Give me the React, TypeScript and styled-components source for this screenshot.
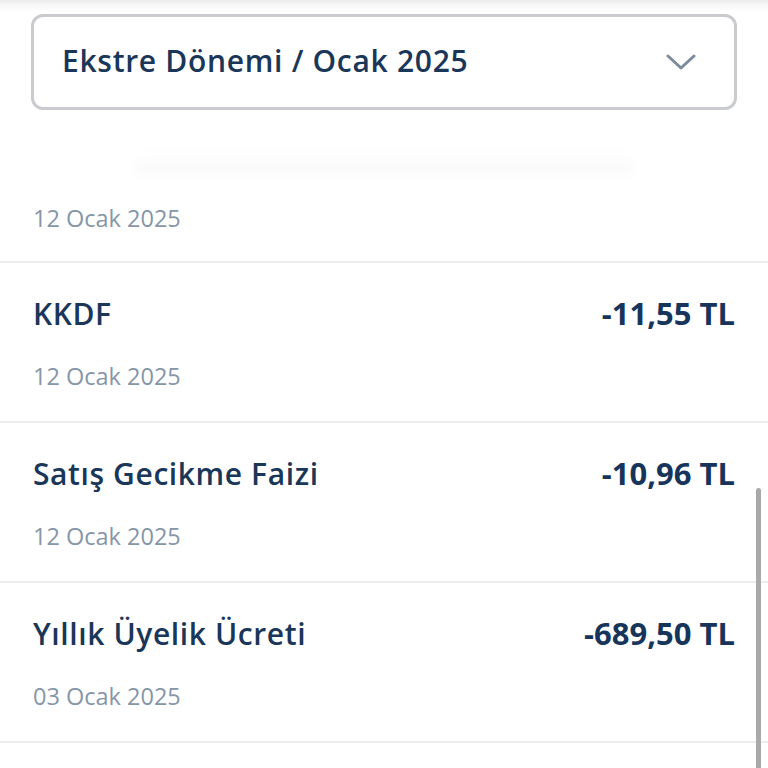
import React from "react";
import styled, { createGlobalStyle } from "styled-components";

const Global = createGlobalStyle`
  html, body { margin: 0; padding: 0; background: #ffffff; }
  body { font-family: "Open Sans", "Noto Sans", sans-serif; -webkit-font-smoothing: antialiased; }
  * { box-sizing: border-box; }
`;

const Page = styled.div`
  position: relative;
  width: 768px;
  height: 768px;
  overflow: hidden;
  background: #ffffff;
`;

const Header = styled.div`
  padding: 14px 31px 0 31px;
  background: linear-gradient(to bottom, #ececec 0px, #f7f7f7 5px, #ffffff 12px);
  background-repeat: no-repeat;
  background-size: 100% 14px;
`;

const Select = styled.div`
  height: 96px;
  border: 3px solid #c9cbce;
  border-radius: 12px;
  background: #ffffff;
  display: flex;
  align-items: center;
  justify-content: space-between;
  padding: 0 38px 0 28px;
`;

const SelectLabel = styled.span`
  font-size: 30px;
  font-weight: 600;
  color: #1a3658;
  letter-spacing: 0.7px;
  margin-top: -4px;
`;

const ShadowBand = styled.div`
  height: 64px;
  display: flex;
  justify-content: center;
  align-items: flex-end;
`;

const Band = styled.div`
  width: 500px;
  height: 22px;
  background: linear-gradient(to bottom, #ffffff, #f8f8f8);
  filter: blur(6px);
`;

const List = styled.div`
  display: flex;
  flex-direction: column;
`;

const TopDate = styled.div`
  height: 89px;
  display: flex;
  align-items: flex-start;
  padding: 28px 33px 0;
  border-bottom: 2px solid #ededee;
`;

const Row = styled.div`
  height: 160px;
  padding: 0 33px;
  border-bottom: 2px solid #ededee;
  display: flex;
  flex-direction: column;
`;

const RowTop = styled.div`
  display: flex;
  justify-content: space-between;
  align-items: center;
  margin-top: 29px;
`;

const Title = styled.span`
  font-size: 30px;
  font-weight: 600;
  color: #1a3658;
  letter-spacing: 0.6px;
`;

const Amount = styled.span`
  font-size: 31px;
  font-weight: 700;
  color: #17345a;
`;

const DateText = styled.span`
  font-size: 23.5px;
  font-weight: 400;
  color: #8596a8;
  margin-top: 26px;
`;

const TopDateText = styled(DateText)`
  margin-top: 0;
`;

const Scrollbar = styled.div`
  position: absolute;
  right: 7px;
  top: 488px;
  bottom: -10px;
  width: 5px;
  border-radius: 3px;
  background: #a9a9a9;
`;

const Chevron = () => (
  <svg width="30" height="18" viewBox="0 0 30 18" fill="none">
    <path d="M2 3 L15 15 L28 3" stroke="#7b8a9c" strokeWidth="3" strokeLinecap="round" strokeLinejoin="round" />
  </svg>
);

const rows = [
  { title: "KKDF", amount: "-11,55 TL", date: "12 Ocak 2025" },
  { title: "Satış Gecikme Faizi", amount: "-10,96 TL", date: "12 Ocak 2025" },
  { title: "Yıllık Üyelik Ücreti", amount: "-689,50 TL", date: "03 Ocak 2025" },
];

export default function App() {
  return (
    <Page>
      <Global />
      <Header>
        <Select>
          <SelectLabel>Ekstre Dönemi / Ocak 2025</SelectLabel>
          <Chevron />
        </Select>
      </Header>
      <ShadowBand>
        <Band />
      </ShadowBand>
      <List>
        <TopDate>
          <TopDateText>12 Ocak 2025</TopDateText>
        </TopDate>
        {rows.map((r) => (
          <Row key={r.title}>
            <RowTop>
              <Title>{r.title}</Title>
              <Amount>{r.amount}</Amount>
            </RowTop>
            <DateText>{r.date}</DateText>
          </Row>
        ))}
      </List>
      <Scrollbar />
    </Page>
  );
}
